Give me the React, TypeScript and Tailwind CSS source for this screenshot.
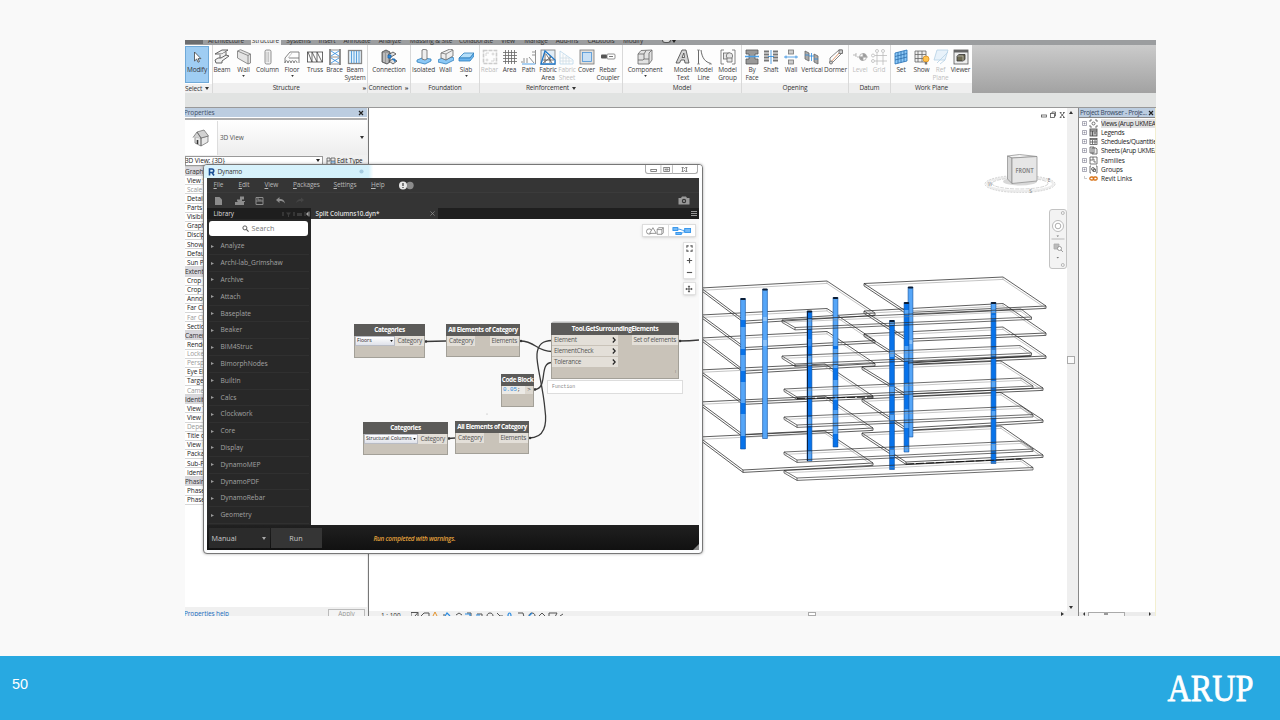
import React from "react";

const UI = "font-['Open_Sans','Noto_Sans',sans-serif]";

/* ---------- Ribbon icons ---------- */
const icons: Record<string, React.ReactNode> = {
  cursor: <path d="M5.5 3v9l2.200-2 1.300 3.200 1.400-.6-1.300-3h2.800z" fill="#fff" stroke="#444" strokeWidth=".8" />,
  beam: (
    <g fill="#f2f2f2" stroke="#555" strokeWidth=".9">
      <path d="M1 5l7-4h6l-6 4z" />
      <path d="M6 6v5l6-3.500V3" />
      <path d="M1 11l3-2h3l5-3 3 1-7 5v2H2z" />
    </g>
  ),
  wall: <path d="M1.500 2l3-1.300L14.500 5v9l-2.500 1L1.500 9zM1.500 2L12 6.500V15M12 6.500L14.500 5" fill="#e4e4e4" stroke="#777" />,
  column: <g fill="#eee" stroke="#777"><rect x="5" y="1" width="6" height="14" rx="1.500" /><path d="M7 3v10M8.500 3v10" stroke="#bbb" /></g>,
  floor: <g fill="none" stroke="#666"><path d="M1 14V9l5-6h9v6H5M15 9v5" /><path d="M1 14c0-3 3-3 3 0 0-3 3-3 3 0 0-3 3-3 3 0 0-3 3-3 3 0" /><path d="M4 9l4-5" stroke="#bbb" /></g>,
  truss: <path d="M0 3h16M0 13h16M.5 3v10M15.500 3v10M1 3l4 10V3l5 10V3l5 10" fill="none" stroke="#444" />,
  brace: <g fill="none"><path d="M3 0v16M13 0v16" stroke="#777" strokeWidth="1.600" /><path d="M3 1h10M3 8h10M3 15h10" stroke="#777" /><path d="M4 2l8 5M12 2L4 7M4 9l8 5M12 9l-8 5" stroke="#2b8be0" /></g>,
  beamsys: <g><rect x="1.500" y="1.500" width="13" height="13" fill="#e2f0fb" stroke="#888" strokeWidth="1.300" /><path d="M4.500 2v12M7 2v12M9.500 2v12M12 2v12" stroke="#4b97d8" strokeWidth=".9" /></g>,
  connection: <g><path d="M1 3l4-2 4 2v10l-3 2-5-2z" fill="#999" stroke="#444" /><path d="M3 4v9M6 4v10" stroke="#eee" /><path d="M7 6l5-3 3 2-5 3zM8 12l4-2 4 2-4 3z" fill="#ddd" stroke="#444" /><path d="M7 6h3v3H7zM11 10h3v3" fill="#2b8be0" stroke="#1b62a8" /></g>,
  isolated: <g><path d="M1 11l5-2 9 1v2l-6 3-8-2z" fill="#8cc8f5" stroke="#2d7dbd" /><path d="M6 1l2-.7 3 .7v9l-2 1-3-1z" fill="#eee" stroke="#666" /></g>,
  fwall: <g><path d="M0 11l4-2 4 2 5-3 3 1v2l-8 4-8-2z" fill="#8cc8f5" stroke="#2d7dbd" /><path d="M3 4l9-4 3 1v6l-7 4-5-2z" fill="#eee" stroke="#666" /><path d="M8 5l7-4M8 5v6M3 4l5 1" stroke="#777" fill="none" /></g>,
  slab: <g stroke="#2d7dbd"><path d="M1 9l5-5h10l-4 5z" fill="#b5dffa" /><path d="M1 9h11l4-5v3l-4 5H1z" fill="#6bb5ee" /></g>,
  rebar: <g fill="none" stroke="#ccc"><rect x="1.500" y="1.500" width="13" height="13" strokeWidth="1.600" strokeDasharray="4 1" /><path d="M4 7V4h3M9 12h3V9" /><circle cx="5" cy="11" r="1" /><circle cx="11" cy="5" r="1" /></g>,
  area: <path d="M3.500 1v14M6.500 1v14M9.500 1v14M12.500 1v14M1 3.500h14M1 6.500h14M1 9.500h14M1 12.500h14" stroke="#666" />,
  path: <g fill="none" stroke="#777"><path d="M14.500 1v14M11 3h3M11 6h3M8 8l5 6M3 9v5M6 9v5M1 12v2" /><path d="M1 15h13.500" stroke="#2b8be0" /></g>,
  fabric: <g fill="none"><rect x="1" y="1" width="14" height="14" stroke="#777" fill="#e2edf6" /><path d="M1 15L5 2l10 9v4z" stroke="#1c76c8" strokeWidth="1.300" fill="#fff" /><path d="M5 14V4M10 14V7M3 11h11M3 14l8-6M6 5l6 9" stroke="#555" /></g>,
  sheet: <g fill="none" stroke="#b9d6ea"><path d="M1 15V2l13 9v4z" /><path d="M4 15V5M7 15V7M10 15V9M1 12h12M1 9h9" stroke="#cfdde6" /></g>,
  cover: <g><rect x="1" y="1" width="14" height="14" fill="#e3e0dc" stroke="#777" /><rect x="3.500" y="3.500" width="9" height="9" fill="#c9e0f5" stroke="#4b93d6" /></g>,
  coupler: <g><path d="M1 7.500h14" stroke="#bbb" strokeWidth="2" /><rect x="1" y="5.500" width="6" height="4" rx="1" fill="#555" /><rect x="7" y="5" width="8" height="5" rx="1" fill="#fff" stroke="#777" /><path d="M9 7.500h4" stroke="#555" /></g>,
  component: <g fill="#e2e2e2" stroke="#666"><path d="M1 5l3-3.500L15 1v10l-3 4H1z" /><path d="M1 5h6v5h5V4l3-3M7 5l2-3.500M12 15v-5M7 10l-1 1H1" fill="none" /></g>,
  mtext: <g><path d="M1 14L7 1h4l3 13h-4l-.6-3H6l-1.500 3z" fill="#d4d4d4" stroke="#444" /><path d="M7 8.500L8.800 4l.8 4.500z" fill="#fff" stroke="#444" strokeWidth=".8" /></g>,
  mline: <g fill="none" stroke="#444"><path d="M2.500 1v14M5 1c1 8 4 12 10 13.500" /><path d="M1 1h3M1 15h3M13 15h3" stroke="#888" /></g>,
  mgroup: <g fill="#e6e6e6" stroke="#666"><path d="M4 1H1v14h3M12 1h3v14h-3" fill="none" /><rect x="3.500" y="4" width="6" height="6" /><circle cx="9.500" cy="7" r="3.200" /><path d="M7 9h5v4H7z" /></g>,
  face: <g><path d="M2 1h12v4h-3v5h3v5H2v-5h3V5H2z" fill="#999" stroke="#555" /><path d="M1 7.500h14" stroke="#4b9fe6" strokeWidth="1.500" /></g>,
  shaft: <g><path d="M1 2.500h5M1 5.500h5M1 8.500h5M1 11.500h5M10 2.500h5M10 5.500h5M10 8.500h5M10 11.500h5" stroke="#777" strokeWidth="2" /><path d="M8 1v14M5 7.500h6" stroke="#2b8be0" /></g>,
  owall: <g><rect x="5.500" y="1" width="5" height="4" fill="#ccc" stroke="#777" /><rect x="5.500" y="11" width="5" height="4" fill="#ccc" stroke="#777" /><path d="M1 8h14M3 6.500v3M13 6.500v3" stroke="#2b8be0" /></g>,
  vertical: <g><path d="M1 2l4 2v8l-4-2zM10 5l4 2v8l-4-2z" fill="#aaa" stroke="#666" /><path d="M5 7h5M7.500 4v8M1 6h4M10 10h4" stroke="#2b8be0" /></g>,
  dormer: <g fill="none" stroke="#666"><path d="M2 14V9L11 1h3v3L5 13z" /><path d="M2 14l11-12" stroke="#d9824a" /><rect x="11" y="1" width="3.500" height="3.500" fill="#ccc" /><circle cx="3" cy="13.500" r="1.500" fill="#ccc" /></g>,
  level: <g fill="none" stroke="#aaa"><path d="M1 6h3M4 4v4M5 8h11" /><circle cx="11" cy="8" r="3.500" /><path d="M11 4.500V8h3.500A3.500 3.500 0 0011 4.500M11 11.500V8H7.500A3.500 3.500 0 0011 11.500" fill="#999" /></g>,
  grid: <g fill="none" stroke="#bbb"><circle cx="6" cy="2" r="1.500" /><circle cx="12" cy="2" r="1.500" /><circle cx="2" cy="6.500" r="1.500" /><circle cx="2" cy="12" r="1.500" /><path d="M6 4v12M12 4v12M4 6.500h12M4 12h12" /></g>,
  set: <g><path d="M2 4l12-3v11L2 15z" fill="#8cc8f7" stroke="#226fb5" /><path d="M5 3.300v11M8 2.600v11M11 1.800v11M2 7.500l12-3M2 11l12-3" stroke="#2a6cab" strokeWidth=".8" /></g>,
  show: <g><path d="M1 2h11v11H1zM4 2v11M8 2v11M1 5.500h11M1 9.500h11" fill="#eee" stroke="#666" /><circle cx="12" cy="10" r="3" fill="#ffc24d" stroke="#d98e1f" /><rect x="10.800" y="13" width="2.400" height="2.500" fill="#777" /></g>,
  ref: <g fill="#e8f2fa" stroke="#b5d0e4"><path d="M4 1h11l-3 10H1z" /><path d="M4 14l11-11M12 11l-5 4" fill="none" /></g>,
  viewer: <g><rect x="1" y="1" width="14" height="14" fill="#eee" stroke="#555" /><rect x="1" y="1" width="14" height="2.500" fill="#666" /><path d="M4 7l2-1.500h6v5L10 12H4z" fill="#6f6b52" stroke="#333" /><path d="M4 7h6v5" fill="none" stroke="#ccc" strokeWidth=".6" /></g>,
};

type Tool = { c: number; l: string[]; i: string; off?: boolean; arrow?: boolean };
type Panel = { w: string; x: number; title: string; tools: Tool[]; mark?: string };

const panels: Panel[] = [
  { w: "w-[155px]", x: 212, title: "Structure", mark: "»", tools: [
    { c: 222, l: ["Beam"], i: "beam" }, { c: 243.5, l: ["Wall"], i: "wall", arrow: true }, { c: 267.5, l: ["Column"], i: "column" },
    { c: 292, l: ["Floor"], i: "floor", arrow: true }, { c: 315, l: ["Truss"], i: "truss" }, { c: 334.5, l: ["Brace"], i: "brace" }, { c: 355, l: ["Beam", "System"], i: "beamsys" } ] },
  { w: "w-[43px]", x: 367, title: "Connection", mark: "»", tools: [{ c: 389, l: ["Connection"], i: "connection" }] },
  { w: "w-[69px]", x: 410, title: "Foundation", tools: [
    { c: 423.5, l: ["Isolated"], i: "isolated" }, { c: 445.5, l: ["Wall"], i: "fwall" }, { c: 466, l: ["Slab"], i: "slab", arrow: true } ] },
  { w: "w-[143px]", x: 479, title: "Reinforcement", mark: "▾", tools: [
    { c: 489.5, l: ["Rebar"], i: "rebar", off: true }, { c: 509.5, l: ["Area"], i: "area" }, { c: 528.5, l: ["Path"], i: "path" },
    { c: 548, l: ["Fabric", "Area"], i: "fabric" }, { c: 567, l: ["Fabric", "Sheet"], i: "sheet", off: true }, { c: 586.5, l: ["Cover"], i: "cover" }, { c: 608, l: ["Rebar", "Coupler"], i: "coupler" } ] },
  { w: "w-[119px]", x: 622, title: "Model", tools: [
    { c: 645, l: ["Component"], i: "component", arrow: true }, { c: 683, l: ["Model", "Text"], i: "mtext" }, { c: 703.5, l: ["Model", "Line"], i: "mline" }, { c: 727.5, l: ["Model", "Group"], i: "mgroup" } ] },
  { w: "w-[107px]", x: 741, title: "Opening", tools: [
    { c: 752, l: ["By", "Face"], i: "face" }, { c: 771, l: ["Shaft"], i: "shaft" }, { c: 791, l: ["Wall"], i: "owall" }, { c: 812, l: ["Vertical"], i: "vertical" }, { c: 835.5, l: ["Dormer"], i: "dormer" } ] },
  { w: "w-[42px]", x: 848, title: "Datum", tools: [{ c: 860, l: ["Level"], i: "level", off: true }, { c: 879, l: ["Grid"], i: "grid", off: true }] },
  { w: "w-[82px]", x: 890, title: "Work Plane", tools: [
    { c: 901, l: ["Set"], i: "set" }, { c: 921.5, l: ["Show"], i: "show" }, { c: 940.5, l: ["Ref", "Plane"], i: "ref", off: true }, { c: 960.5, l: ["Viewer"], i: "viewer" } ] },
];

function ToolButton({ t, gap }: { t: Tool; gap: number }) {
  return (
    <div className={"flex w-5 shrink-0 flex-col items-center whitespace-nowrap text-[6.5px] leading-[8px] tracking-[-0.13px] " + (t.off ? "text-[#bdbdbd]" : "text-[#3c3c3c]")} style={{ marginLeft: gap }}>
      <svg viewBox="0 0 16 16" strokeWidth=".8" className="mb-px mt-[3.500px] size-4 shrink-0">{icons[t.i]}</svg>
      {t.l.map((s) => <span key={s}>{s}</span>)}
      {t.arrow && <svg viewBox="0 0 4 3" className="mt-px h-[2px] w-[3px]"><path d="M0 0h4L2 3z" fill="#333" /></svg>}
    </div>
  );
}

const tabs: [string, number][] = [["Architecture", 226], ["Structure", 265.500], ["Systems", 298.500], ["Insert", 327], ["Annotate", 357], ["Analyze", 390], ["Massing & Site", 431], ["Collaborate", 476], ["View", 508], ["Manage", 536], ["Add-Ins", 567], ["CADtools", 601], ["Modify", 633]];

function Ribbon() {
  return (
    <>
      <div className="flex h-[5px] shrink-0 overflow-hidden bg-[#9b9d9f] text-[6.5px] leading-[6px] tracking-[-0.1px] text-[#333]">
        <div className="h-1 w-[18px] shrink-0 bg-[#6c6d6f]" />
        {tabs.map(([t, c], i) => (
          <div key={t} className={"-mt-[2px] h-[7px] w-[30px] shrink-0 whitespace-nowrap " + (t === "Structure" ? "bg-[#efefef]" : "")} style={{ marginLeft: c - 15 - (i ? tabs[i - 1][1] + 15 : 203) }}>
            <span className="-mx-4 flex justify-center">{t}</span>
          </div>
        ))}
        <div className="ml-[14px] mt-0 h-[3px] w-[9px] rounded-b border border-t-0 border-[#555] bg-[#ddd]" />
        <svg viewBox="0 0 4 3" className="ml-px h-[3px] w-1"><path d="M0 0h4L2 3z" fill="#222" /></svg>
      </div>
      <div className="flex h-[48px] shrink-0 bg-gradient-to-b from-[#cbcbcb] to-[#a2a2a2]">
        <div className="flex w-[27px] flex-col bg-white text-[6.5px] tracking-[-0.13px] text-[#333]">
          <div className="mt-[1px] flex h-[37px] w-[24px] flex-col items-center border border-[#6fa9d8] bg-[#9fcdf3] leading-[8px]">
            <svg viewBox="0 0 16 16" className="mb-px mt-[1.500px] size-4 shrink-0">{icons.cursor}</svg>
            <span>Modify</span>
          </div>
          <div className="mt-px flex h-[9px] items-center gap-[3px] whitespace-nowrap bg-[#f0f0f0] leading-[9px]">Select <svg viewBox="0 0 4 3" className="h-[3px] w-1"><path d="M0 0h4L2 3z" fill="#333" /></svg></div>
        </div>
        {panels.map((p) => (
          <div key={p.title} className={"flex shrink-0 flex-col border-l border-[#d9d9d9] bg-[#fdfdfd] " + p.w}>
            <div className="flex h-[38px]">
              {p.tools.map((t, i) => <ToolButton key={i} t={t} gap={i ? t.c - p.tools[i - 1].c - 20 : t.c - p.x - 11} />)}
            </div>
            <div className="flex h-[10px] items-center justify-center gap-[3px] whitespace-nowrap bg-[#efefef] text-[6.5px] leading-[10px] tracking-[-0.13px] text-[#333]">
              <span className={p.title === "Structure" ? "flex-1 text-center" : ""}>{p.title}</span>
              {p.mark === "»" && <span className="pr-px text-[6px] font-bold">»</span>}
              {p.mark === "▾" && <svg viewBox="0 0 4 3" className="h-[3px] w-1"><path d="M0 0h4L2 3z" fill="#333" /></svg>}
            </div>
          </div>
        ))}
      </div>
      <div className="h-[14px] shrink-0 bg-[#e1e3e2]" />
    </>
  );
}

/* ---------- Properties palette ---------- */
const rows = ["#Graphi", "View S", "-Scale", "Detail", "Parts", "Visibil", "Graph", "Discip", "Show", "Defau", "Sun P", "#Extents", "Crop", "Crop", "Annot", "Far Cl", "-Far Cl", "Sectio", "#Camer", "Rende", "-Locke", "-Persp", "Eye El", "Targe", "-Came", "#Identity", "View T", "View N", "-Deper", "Title o", "View R", "Packa", "Sub-P", "Identi", "#Phasin", "Phase", "Phase"];

function Properties() {
  return (
    <div className="flex w-[182px] shrink-0 flex-col bg-white text-[6.5px] leading-[9px] tracking-[-0.1px] text-[#222]">
      <div className="flex h-[9px] shrink-0 items-center justify-between bg-[#bccde0] pr-[3px]">
        <span className="-ml-[1px] text-[#40516a]">Properties</span>
        <svg viewBox="0 0 6 6" className="size-[6px]"><path d="M1 1l4 4M5 1L1 5" stroke="#222" strokeWidth="1.200" /></svg>
      </div>
      <div className="mt-px h-[2px] shrink-0 bg-[#aeaeae]" />
      <div className="flex h-[35px] shrink-0 items-center bg-gradient-to-b from-white to-[#ededed]">
        <div className="flex h-[34px] w-[33px] items-center border-r border-[#ddd] bg-white">
          <svg viewBox="0 0 18 18" strokeWidth=".7" strokeLinejoin="round" className="ml-[7px] size-[18px]"><path d="M3 8v6l6 3V9zM9 9l7-2v6l-7 4z" fill="#e8e8e8" stroke="#666" /><path d="M1 8.500L5 3l4 6M5 3l7-2 4.500 6L9 9z" fill="#d2d2d2" stroke="#666" /><path d="M5.500 11v4" stroke="#333" strokeWidth="1.600" /></svg>
        </div>
        <span className="ml-[2px] flex-1 text-[#555]">3D View</span>
        <svg viewBox="0 0 4 3" className="mr-[3px] h-[3px] w-1"><path d="M0 0h4L2 3z" fill="#333" /></svg>
      </div>
      <div className="flex h-[12px] shrink-0 items-center border-b border-[#ccc] bg-[#f0f0f0]">
        <div className="flex h-[10px] w-[138px] items-center justify-between border border-[#999] bg-white pr-[2px]">
          <span className="-ml-[1px]">3D View: {"{3D}"}</span>
          <svg viewBox="0 0 4 3" className="h-[3px] w-1"><path d="M0 0h4L2 3z" fill="#222" /></svg>
        </div>
        <svg viewBox="0 0 10 8" strokeWidth=".8" className="ml-[3px] h-2 w-[10px]"><path d="M1 7V1h3v3H1M5 7V1h4v6H5M5 4h4" fill="#eee" stroke="#555" /><path d="M5 5h4" stroke="#2b8be0" /></svg>
        <span className="ml-px text-[6.300px] tracking-[-0.15px]">Edit Type</span>
      </div>
      {rows.map((r, i) => {
        const head = r[0] === "#", dim = r[0] === "-";
        return (
          <div key={i} className={"flex h-[9.140px] w-[18px] shrink-0 items-center overflow-hidden whitespace-nowrap border-b border-[#d6d6d6] " + (head ? "bg-[#d9d8dd] text-[#333]" : dim ? "pl-[2px] text-[#999]" : "pl-[2px]")}>
            {head || dim ? r.slice(1) : r}
          </div>
        );
      })}
      <div className="flex-1" />
      <div className="flex h-[9px] shrink-0 items-start justify-between overflow-hidden bg-[#f0f0f0] pr-[2px] pt-[2px]">
        <span className="-ml-px text-[#1b6fc0]">Properties help</span>
        <span className="w-[37px] border border-[#bbb] bg-[#f4f4f4] text-center leading-[8px] text-[#999]">Apply</span>
      </div>
    </div>
  );
}

/* ---------- 3D model ---------- */
type P = [number, number];
const leftSlabs: P[][] = [
  [[701, 288], [827, 281], [875, 313], [745, 321]], [[701, 315], [827, 308.500], [875, 340.500], [745, 347.500]],
  [[701, 338], [827, 331.500], [875, 363.500], [745, 371]], [[699, 370], [825, 364], [873, 396], [743, 402]],
  [[699, 402], [825, 396], [873, 428], [743, 434.500]], [[699, 437], [825, 431], [873, 463], [743, 470]],
];
const rightSlabs: P[][] = [
  [[864, 283.500], [1003, 277], [1046, 306], [908, 312.500]], [[864, 311], [1003, 303.500], [1046, 333], [908, 339]],
  [[864, 334], [1003, 327], [1046, 356], [908, 362]], [[862, 367], [1001, 361], [1043, 388], [906, 394]],
  [[862, 399], [1001, 392.500], [1043, 420], [906, 428]], [[862, 433], [1001, 426], [1043, 455], [906, 462]],
];
const frontSlabs: P[][] = [
  [[782, 320], [1021, 309], [1031.500, 317], [795, 327.500]], [[782, 356], [1020, 345.500], [1031.500, 353], [795, 364]],
  [[784, 389], [1021, 378], [1033, 386], [797, 397]], [[784, 417], [1021, 406], [1033, 414.500], [797, 425]],
  [[784, 452], [1021, 441], [1033, 449], [797, 460]], [[784, 470.500], [1021, 459], [1033, 467.500], [797, 478]],
];
function Slab({ p }: { p: P[] }) {
  const [a, b, c, d] = p, h = 2.400;
  return (
    <g fill="none" stroke="#2a2a2a" strokeWidth=".75">
      <path d={`M${a}L${b}L${c}L${d}Z`} />
      <path d={`M${a}v${h}L${d[0]} ${d[1] + h}L${c[0]} ${c[1] + h}V${c[1]}M${d}v${h}`} />
      <path d={`M${a[0]} ${a[1] + h}L${b[0]} ${b[1] + h}L${c[0]} ${c[1] + h}M${b}v${h}`} stroke="#888" strokeWidth=".5" />
    </g>
  );
}
const D = "#0873ea", L = "#56a6f8";
const columns: { x: number; y: number; b: number; base: string; seg: [number, number, string][] }[] = [
  { x: 743, y: 298.500, b: 449, base: L, seg: [[320, 327, D], [349, 355, D], [371, 382, D], [403, 414, D], [436, 449, D]] },
  { x: 765, y: 289, b: 438.500, base: L, seg: [[317, 321, "#8bc3fb"], [340, 346, "#8bc3fb"]] },
  { x: 809.500, y: 311, b: 461, base: D, seg: [[319, 329, L], [339, 346, "#2e8bf2"], [356, 366, L], [388, 398, L], [417, 426, L], [451, 461, L]] },
  { x: 835.500, y: 297.500, b: 447, base: L, seg: [[346, 349, D], [368, 380, D], [400, 410, D], [434, 447, D]] },
  { x: 910.500, y: 287, b: 437, base: L, seg: [[340, 344, "#8bc3fb"]] },
  { x: 906.500, y: 302.500, b: 452, base: D, seg: [[310, 315, L], [346, 361, L], [383, 395, L], [409, 428, L], [446, 452, L]] },
  { x: 892, y: 320.500, b: 469.500, base: D, seg: [[320.500, 325, L], [350, 357, L], [387, 394, L], [415, 421, L], [450, 457, L]] },
  { x: 993.500, y: 302.500, b: 463.500, base: D, seg: [[304, 313, L], [315, 319, "#2e8bf2"], [350, 356, L], [381, 388, L], [411, 418, L], [444, 451, L]] },
];

function Model() {
  return (
    <svg viewBox="369 108 698 503" className="block h-[503px] w-[698px]" fontFamily="Open Sans, sans-serif">
      {leftSlabs.map((p, i) => <Slab key={"l" + i} p={p} />)}
      {rightSlabs.map((p, i) => <Slab key={"r" + i} p={p} />)}
      {columns.map((c, i) => (
        <g key={i}>
          <rect x={c.x - 2.400} y={c.y} width="4.800" height={c.b - c.y} fill={c.base} />
          {c.seg.map((s, j) => <rect key={j} x={c.x - 2.400} y={s[0]} width="4.800" height={s[1] - s[0]} fill={s[2]} />)}
          <path d={`M${c.x - 2.400} ${c.y}V${c.b}h4.800V${c.y}`} fill="none" stroke="#0d4f9e" strokeWidth=".6" />
          <rect x={c.x - 2.600} y={c.y - .5} width="5.200" height="2" rx=".8" fill="#0b1d35" />
        </g>
      ))}
      <g opacity=".9">{frontSlabs.map((p, i) => <Slab key={"f" + i} p={p} />)}</g>
      <path d="M807.500 312v149" stroke="#0c1830" strokeWidth=".9" />
      <path d="M797 398.500L873 397M906 464L1021 459" stroke="#111" strokeWidth=".9" strokeDasharray="8 2" fill="none" />
      <path d="M908 363L1031 356" stroke="#222" strokeWidth=".9" />
      {/* document window buttons */}
      <g fill="none" stroke="#555" strokeWidth=".8"><rect x="1041.500" y="115" width="5" height="2" /><rect x="1050.500" y="113.500" width="4" height="4" /><path d="M1052 113.500v-1.500h3.500v4h-1.500" /><path d="M1060 112.500l4.500 5M1064.500 112.500l-4.500 5M1060 112.500h1.500M1063 112.500h1.500M1060 117.500h1.500M1063 117.500h1.500" strokeWidth=".9" /></g>
      {/* view cube */}
      <g>
        <ellipse cx="1020" cy="184" rx="33" ry="7" fill="none" stroke="#ececec" strokeWidth="2" />
        <ellipse cx="1020" cy="184" rx="35" ry="8.500" fill="none" stroke="#b5b5b5" strokeWidth=".6" strokeDasharray="2 1" />
        <ellipse cx="1020" cy="183.500" rx="28" ry="5.500" fill="#fff" stroke="#b8b8b8" strokeWidth=".6" strokeDasharray="4 1" />
        <ellipse cx="1020" cy="181.500" rx="17" ry="4" fill="#c8c8c8" opacity=".7" />
        <text x="1030.500" y="193" fontSize="5" fill="#777" textAnchor="middle">S</text>
        <text x="990" y="186" fontSize="4.500" fill="#777" textAnchor="middle">W</text>
        <text x="1049" y="182" fontSize="4.500" fill="#777" textAnchor="middle">E</text>
        <path d="M1007.500 156l12-1.500 17.500 2-25 1.500z" fill="#f4f4f4" stroke="#888" strokeWidth=".7" />
        <path d="M1007.500 156l4.500 2v25.500l-4.500-4.500z" fill="#d5d5d5" stroke="#888" strokeWidth=".7" />
        <path d="M1012 158l25-1.500V181l-25 2.500z" fill="#e6e6e6" stroke="#888" strokeWidth=".7" />
        <text x="1015.500" y="173.300" fontSize="7" fontWeight="700" fill="#8a8a8a" textLength="18" lengthAdjust="spacingAndGlyphs">FRONT</text>
      </g>
      {/* navigation bar */}
      <g fill="none" stroke="#aaa" strokeWidth=".8">
        <rect x="1049.500" y="209.500" width="17" height="59" rx="2.500" fill="#f3f3f3" stroke="#b5b5b5" />
        <circle cx="1062.800" cy="213" r="1.500" /><circle cx="1062.800" cy="265" r="1.500" />
        <circle cx="1058" cy="226" r="5.500" fill="#fff" /><circle cx="1058" cy="226" r="2.800" stroke="#999" />
        <path d="M1051.500 239h13" />
        <path d="M1054 244h5v5h-5z" fill="#bbb" /><circle cx="1059.500" cy="248.500" r="2" fill="#fff" stroke="#888" /><path d="M1061 250l2 2" stroke="#888" />
        <path d="M1056.500 235.500h2.500l-1.200 1.500zM1056.500 257h2.500l-1.200 1.500z" fill="#777" stroke="none" />
      </g>
    </svg>
  );
}

/* ---------- Project browser ---------- */
const tree: [string, React.ReactNode][] = [
  ["Views (Arup UKMEA", <g fill="none" stroke="#555"><path d="M1 3V1h2M6 1h2v2M8 6v2H6M3 8H1V6" /><circle cx="4.500" cy="4.500" r="1.500" /></g>],
  ["Legends", <g><rect x="1" y="1" width="7" height="7" fill="#bbb" stroke="#444" /><path d="M1 3h7M3.500 3v5M5 5h2" stroke="#444" /></g>],
  ["Schedules/Quantities", <g><rect x="1" y="1.500" width="7" height="6" fill="#fff" stroke="#555" /><path d="M1 2.500h7M1 5h7M3.500 3v4M6 3v4" stroke="#555" /></g>],
  ["Sheets (Arup UKMEA", <path d="M1 1h4v6H1zM3 2h4l1 1v5H3z" fill="#eee" stroke="#555" />],
  ["Families", <path d="M1 1h7v7H1zM1 4h3V1M5 3v3h2" fill="#fff" stroke="#555" />],
  ["Groups", <g fill="none" stroke="#555"><path d="M2 1H1v7h1M7 1h1v7H7" /><circle cx="4" cy="4" r="1.500" /><path d="M4 4h2.500v2.500H4z" /></g>],
  ["Revit Links", <g fill="none" stroke="#d8741a" strokeWidth="1.300"><rect x=".8" y="3" width="4" height="3" rx="1.500" /><rect x="4.200" y="3" width="4" height="3" rx="1.500" /></g>],
];
function Browser() {
  return (
    <div className="flex w-[78px] shrink-0 flex-col overflow-hidden border-l border-r border-l-[#888] border-r-[#f3efd0] bg-white text-[6.500px] leading-[9px] tracking-[-0.3px] text-[#222]">
      <div className="flex h-[9px] shrink-0 items-center justify-between bg-[#bccde0] pl-px pr-px text-[#33455e]">
        <span className="whitespace-nowrap">Project Browser - Proje...</span>
        <svg viewBox="0 0 6 6" className="size-[6px] shrink-0"><path d="M1 1l4 4M5 1L1 5" stroke="#222" strokeWidth="1.200" /></svg>
      </div>
      <div className="mb-px h-px shrink-0 bg-[#888]" />
      {tree.map(([t, ic], i) => (
        <div key={t} className="flex h-[9.140px] shrink-0 items-center whitespace-nowrap pl-[3px]">
          <svg viewBox="0 0 5 5" className="size-[5px] shrink-0">{i < 6 ? <path d="M.5.500h4v4h-4zM1.500 2.500h2M2.500 1.500v2" fill="#fff" stroke="#889" strokeWidth=".7" /> : <path d="M2.500 0v2.500H5" fill="none" stroke="#aaa" strokeWidth=".6" />}</svg>
          <svg viewBox="0 0 9 9" strokeWidth=".8" className="ml-[2px] size-[9px] shrink-0">{ic}</svg>
          <span className={"ml-[3px] w-[54px] overflow-hidden " + (i === 0 ? "bg-[#e2e2e2]" : "") + (i > 3 ? " tracking-[-0.1px]" : "")}>{t}</span>
        </div>
      ))}
      <div className="flex-1" />
      <div className="flex h-[4px] shrink-0 justify-between bg-[#ececec] px-[4px]">
        <svg viewBox="0 0 2 4" className="h-1 w-[2px]"><path d="M2 0v4L0 2z" fill="#333" /></svg>
        <div className="mr-[22px] flex w-[37px] justify-center border border-b-0 border-[#aaa] bg-[#f8f8f8]"><div className="h-[2px] w-1 bg-[#999]" /></div>
        <svg viewBox="0 0 2 4" className="h-1 w-[2px]"><path d="M0 0v4l2-2z" fill="#333" /></svg>
      </div>
    </div>
  );
}

/* ---------- Dynamo ---------- */
const library = ["Analyze", "Archi-lab_Grimshaw", "Archive", "Attach", "Baseplate", "Beaker", "BIM4Struc", "BimorphNodes", "BuiltIn", "Calcs", "Clockwork", "Core", "Display", "DynamoMEP", "DynamoPDF", "DynamoRebar", "Geometry"];
const OX = 311, OY = 219;
const box = (x: number, y: number, w: number, h: number) => ({ left: x - OX, top: y - OY, width: w, height: h });

function Node({ r, title, children }: { r: [number, number, number, number]; title: string; children: React.ReactNode }) {
  return (
    <div className="absolute flex flex-col border border-[#a3a098] bg-[#c9c3b9]" style={box(...r)}>
      <div className="-mx-px -mt-px flex h-[12px] shrink-0 items-center justify-center whitespace-nowrap bg-[#5c5b59] text-[6.400px] font-bold tracking-[-0.34px] text-white">{title}</div>
      {children}
    </div>
  );
}
const port = "flex h-[10px] items-center whitespace-nowrap bg-[#e3dfd8] px-[2px] text-[6.400px] tracking-[-0.25px] text-[#555]";

function InOut() {
  return <div className="flex justify-between"><span className={port + " w-[28px]"}>Category</span><span className={port + " w-[29px] justify-end"}>Elements</span></div>;
}
function Select({ value, w }: { value: string; w: string }) {
  return (
    <div className="flex justify-between">
      <span className={"flex h-[10px] items-center justify-between whitespace-nowrap border border-[#b9bcc4] bg-gradient-to-b from-white to-[#dfe2ea] px-px text-[5.1px] text-[#222] " + w}>
        {value}<svg viewBox="0 0 4 3" className="h-[2px] w-[3px]"><path d="M0 0h4L2 3z" fill="#111" /></svg>
      </span>
      <span className={port}>Category</span>
    </div>
  );
}

function Workspace() {
  return (
    <div className="relative h-[306px] overflow-hidden bg-[#f9f9f9]">
      <svg viewBox="311 219 388 306" className="absolute left-0 top-0 h-[306px] w-[388px]">
        <g fill="none" stroke="#3a3a3a" strokeWidth="1.300">
          <path d="M425 341.500L446 341M448 438.500L455 438M679 341Q690 341 699 340" />
          <path d="M520 341C536 341 536 351.500 552 351.500" />
          <path d="M534 389.500C549 389.500 538 362.500 552 362.500" />
          <path d="M529 438C545 438 547 424 545 410C543 385 536 365 537 354C538 344 543 340.500 552 340.500" />
        </g>
        <g fill="#333"><circle cx="426" cy="341.500" r="1.300" /><circle cx="521" cy="341" r="1.300" /><circle cx="530" cy="438" r="1.300" /><circle cx="535" cy="389.500" r="1.300" /><circle cx="680" cy="341" r="1.300" /><circle cx="449" cy="438.500" r="1.300" /></g>
        <path d="M551 324q0-2.500 3-2.500h122q3 0 3 2.500z" fill="#bbb" />
        <circle cx="487" cy="414" r=".5" fill="#999" />
      </svg>
      <Node r={[354, 324, 71, 34]} title="Categories"><Select value="Floors" w="w-[43px]" /></Node>
      <Node r={[446, 324, 74, 33]} title="All Elements of Category"><InOut /></Node>
      <Node r={[551, 323, 128, 56]} title="Tool.GetSurroundingElements">
        <div className="flex items-start justify-between">
          <div className="flex w-[66px] flex-col gap-px">
            {["Element", "ElementCheck", "Tolerance"].map((t) => (
              <span key={t} className={port + " justify-between"}>{t}<svg viewBox="0 0 4 6" className="h-[6px] w-1"><path d="M.8.500L3.200 3 .8 5.500" fill="none" stroke="#222" strokeWidth="1.200" /></svg></span>
            ))}
          </div>
          <span className={port}>Set of elements</span>
        </div>
        <span className="mr-[2px] mt-[2px] self-end text-[4px] text-[#777]">l</span>
      </Node>
      <div className="absolute border border-[#ddd] bg-white pl-[4px] pt-[2px] font-['Liberation_Mono',monospace] text-[4.800px] leading-[7px] text-[#888]" style={box(547, 380, 136, 14)}>Function</div>
      <Node r={[501, 374, 33, 33]} title="Code Block">
        <div className="flex h-[8px] justify-between bg-[#eceae6] font-['Liberation_Mono',monospace] text-[5.800px] leading-[8px]">
          <span className="pl-px text-[#2b8be0]">0.05<span className="text-[#333]">;</span></span><span className="w-[8px] bg-[#ddd8d0] text-center text-[#444]">&gt;</span>
        </div>
      </Node>
      <Node r={[363, 422, 85, 33]} title="Categories"><Select value="Structural Columns" w="w-[56px]" /></Node>
      <Node r={[455, 421, 74, 33]} title="All Elements of Category"><InOut /></Node>

      <div className="absolute right-[3px] top-[5px] flex h-[13px] w-[54px] items-center border border-[#ddd] bg-white shadow-sm">
        <svg viewBox="0 0 27 12" className="h-3 w-[27px] border-r border-[#ddd]"><g fill="#fff" stroke="#777" strokeWidth=".8"><circle cx="6.500" cy="6.500" r="2.800" /><path d="M10.500 2.500L14 8.500H7z" /><path d="M15 4.500l1.500-2h5v5.500l-1.500 1.500h-5zM15 4.500h5v5M20 4.500l1.500-2" /></g></svg>
        <svg viewBox="0 0 26 12" className="h-3 w-[26px]"><g fill="#74b9f6" stroke="#2b90ea" strokeWidth=".9"><rect x="4" y="2.500" width="5" height="3" /><rect x="7" y="7.500" width="5.500" height="2" /><rect x="16" y="3.500" width="6" height="4" /><path d="M9 4c4 0 3 1.500 7 1.500M12.500 8.500c2 0 1.500-2 3.500-2" fill="none" /></g></svg>
      </div>
      <div className="absolute right-[3px] top-[23px] flex h-[37px] w-[13px] flex-col items-center justify-around border border-[#e2e2e2] bg-white shadow-sm">
        <svg viewBox="0 0 8 8" className="size-[7px]"><path d="M1 3V1h2M5 1h2v2M7 5v2H5M3 7H1V5" fill="none" stroke="#555" strokeWidth="1.200" /></svg>
        <svg viewBox="0 0 8 8" className="size-[7px]"><path d="M1 4h6M4 1v6" stroke="#555" strokeWidth="1.300" /></svg>
        <svg viewBox="0 0 8 8" className="size-[7px]"><path d="M1 4h6" stroke="#555" strokeWidth="1.300" /></svg>
      </div>
      <div className="absolute right-[3px] top-[63px] flex size-[13px] items-center justify-center border border-[#e2e2e2] bg-white shadow-sm">
        <svg viewBox="0 0 10 10" className="size-2"><path d="M5 1v8M1 5h8" stroke="#555" strokeWidth="1.200" /><path d="M3.300 2.500L5 .5l1.700 2zM3.300 7.500L5 9.500l1.700-2zM2.500 3.300L.5 5l2 1.700zM7.500 3.300L9.500 5l-2 1.700z" fill="#555" /></svg>
      </div>
    </div>
  );
}

const menu: [string, number][] = [["File", 214], ["Edit", 239], ["View", 265], ["Packages", 293.500], ["Settings", 334], ["Help", 371.500]];

function Dynamo() {
  return (
    <div className="absolute left-[17.500px] top-[124px] flex h-[390px] w-[500px] flex-col rounded-[4px] border border-[#777] bg-[#fcfdfe] px-[3px] pb-[3px] shadow-[0_0_3px_rgba(0,0,0,0.35)]">
      <div className="-mx-[3px] flex h-[13px] shrink-0 items-center rounded-t-[3px] bg-gradient-to-r from-[#d9f2fb] from-0% via-[#d3f1fb] via-33% to-white to-34% pl-[4px]">
        <svg viewBox="0 0 7 8" className="h-2 w-[7px]"><path d="M1.500 7.500V1h2.500a1.700 1.700 0 010 3.500H2M4 4.500l2 3" fill="none" stroke="#1b4f94" strokeWidth="1.600" /></svg>
        <span className="ml-[3px] text-[6.500px] tracking-[-0.15px] text-[#333]">Dynamo</span>
        <svg viewBox="0 0 6 6" className="ml-[117px] size-[5px]"><circle cx="3" cy="3" r="2.500" fill="#a5cbe0" /></svg>
        <div className="flex-1" />
        <div className="mr-[4px] flex h-[9px] w-[53px] self-start rounded-b-[3px] border border-t-0 border-[#aaa] bg-white">
          <svg viewBox="0 0 53 9" className="h-[9px] w-[53px]"><path d="M15.500 0v9M27.500 0v9" stroke="#bbb" /><g fill="#fff" stroke="#666" strokeWidth=".8"><rect x="5" y="4.500" width="6" height="2" /><rect x="18.500" y="2.500" width="6" height="4" /><path d="M20 4h3v1h-3z" /><path d="M37 2.500h2l1 1 1-1h2M37 6.500h2l1-1 1 1h2M38 2.500v4M42 2.500v4" /></g></svg>
        </div>
      </div>
      <div className="flex h-[14px] shrink-0 items-center bg-[#353535] text-[6.500px] tracking-[-0.15px] text-[#b8b8b8]">
        {menu.map(([m, x], i) => <span key={m} className="w-[25px] shrink-0 whitespace-nowrap" style={{ marginLeft: i ? x - menu[i - 1][1] - 25 : x - 207 }}><span className="underline decoration-[0.5px] underline-offset-1">{m[0]}</span>{m.slice(1)}</span>)}
        <svg viewBox="0 0 17 9" className="ml-[2px] h-[9px] w-[17px]"><circle cx="12" cy="4.500" r="3.700" fill="#8b8b8b" /><circle cx="5" cy="4.500" r="4" fill="#e8e8e8" /><path d="M5 2v3M5 6v1" stroke="#333" strokeWidth="1.200" /></svg>
      </div>
      <div className="flex h-[16px] shrink-0 items-center border-t border-[#3b3b3b] bg-[#343434] px-[6px]">
        <svg viewBox="0 0 96 12" className="h-3 w-24"><g fill="#8c8c8c"><path d="M2 2h4.500L9 4.500V10H2z" /><path d="M27 1.500h4v3h-4zM24 4.500h5v2h-5zM25 6h7v1h-7zM22 7h9v3h-9z" /><path d="M43 2.500h7v7h-7zM43 6h7M45 2.500V5h3.500" fill="none" stroke="#8c8c8c" /><path d="M63 5l3.500-3v2c4 0 5 2 5.500 4.500-1.500-2-3-2.500-5.500-2.500v2z" /></g><path d="M91 5l-3-2.500V4c-3 0-4.500 2-5 4 1.500-1.500 3-2 5-2v1.500z" fill="#454545" /></svg>
        <div className="flex-1" />
        <svg viewBox="0 0 12 9" className="mr-[3px] h-[9px] w-3"><path d="M.5 2H3l1-1.500h4L9 2h2.500v6.500H.5z" fill="#999" /><circle cx="6" cy="5" r="2.200" fill="#343434" /><circle cx="6" cy="5" r="1.100" fill="#999" /></svg>
      </div>
      <div className="flex h-[317px] shrink-0">
        <div className="flex w-[104.500px] shrink-0 flex-col bg-[#282828]">
          <div className="flex h-[11px] shrink-0 items-center bg-[#1e1e1e] pl-[7px] text-[6.400px] tracking-[-0.05px] text-[#ddd]">
            Library
            <svg viewBox="0 0 32 8" className="ml-auto mr-[1px] h-2 w-8"><path d="M5 2v4M16 2v4M27 2v4" stroke="#666" strokeWidth=".7" /><path d="M8 2.500h5L11 5v2h-1V5zM19 3h5v3h-5z" fill="#3c3c3c" /><path d="M30.500 1.500v5L28 4z" fill="#aaa" /><path d="M31.200 1.500v5" stroke="#aaa" strokeWidth=".7" /></svg>
          </div>
          <div className="mx-[2px] mb-[2.500px] mt-[2px] flex h-[15px] w-[99px] shrink-0 items-center justify-center gap-[3px] rounded-[3px] bg-white text-[7.200px] text-[#777]">
            <svg viewBox="0 0 8 8" className="size-[7px]"><circle cx="3.300" cy="3.300" r="2.300" fill="none" stroke="#555" strokeWidth="1.100" /><path d="M5 5l2.500 2.500" stroke="#555" strokeWidth="1.300" /></svg>Search
          </div>
          {library.map((l) => (
            <div key={l} className="mx-[2px] flex h-[16.8px] shrink-0 items-center border-b border-[#303030] text-[6.700px] leading-[14px] text-[#a3a3a3]">
              <svg viewBox="0 0 4 4" className="ml-[2px] mr-[7px] size-[3px]"><path d="M0 0l4 2-4 2z" fill="#999" /></svg>{l}
            </div>
          ))}
        </div>
        <div className="flex min-w-0 flex-1 flex-col">
          <div className="flex h-[11px] items-center justify-between bg-[#1f1f1f]">
            <div className="flex h-[11px] w-[127px] items-center justify-between bg-[#343434] pl-[4.500px] pr-[3px] text-[6.400px] font-semibold tracking-[-0.12px] text-[#ddd]">Split Columns10.dyn*<svg viewBox="0 0 6 6" className="size-[5px]"><path d="M.5.500l5 5M5.500.500l-5 5" stroke="#999" strokeWidth=".8" /></svg></div>
            <div className="mr-[2px] flex w-[6px] flex-col gap-px"><div className="h-px bg-[#999]" /><div className="h-px bg-[#999]" /><div className="h-px bg-[#999]" /></div>
          </div>
          <Workspace />
        </div>
      </div>
      <div className="flex h-[25px] shrink-0 items-start bg-gradient-to-b from-[#202020] to-[#111] pt-[3px] text-[7.200px] text-[#c8c8c8]">
        <div className="ml-[2px] flex h-[20px] w-[61px] items-center justify-between bg-[#2b2b2b] pl-[3px] pr-[4px]">Manual<svg viewBox="0 0 4 3" className="h-[3px] w-1"><path d="M0 0h4L2 3z" fill="#aaa" /></svg></div>
        <div className="ml-px flex h-[20px] w-[51px] items-center justify-center bg-[#353535]">Run</div>
        <span className="ml-[52px] mt-[6px] text-[6.400px] font-semibold italic leading-[9px] tracking-[-0.22px] text-[#e3a13c]">Run completed with warnings.</span>
        <svg viewBox="0 0 6 6" className="ml-auto mt-auto size-[6px]"><path d="M6 0v6H0z" fill="#888" /></svg>
      </div>
    </div>
  );
}

function StatusBar() {
  return (
    <div className="flex h-[5px] w-[698px] shrink-0 items-start overflow-hidden bg-[#f0f0f0]">
      <span className="ml-[12px] w-[30px] text-[6.400px] leading-[9px] text-[#333]">1 : 100</span>
      <svg viewBox="0 0 152 5" className="h-[5px] w-[152px]">
        <g fill="none" stroke="#555" strokeWidth="1"><path d="M0 1.500h7l-3 3.500M0 1.500v4M7 1.500v4M10 5l3-3h5v4M33 5V3M45 4l3-2 3 2M56 2h4v4M66 3h5v3M76 5c0-4 6-4 6 0M86 2l3 3h3M107 2h5l1 4M118 5c0-4 6-4 6 0M128 5l3-3 3 3M138 2h8l-2 4M138 2v4M149 5l3-2" /><path d="M22 5l2-4 2 4" stroke="#e3922b" /><path d="M34 5l2-3 3 3M54 3h5v3M65 4h4M97 5c0-4 3-4 3 0M118 5l3-3" stroke="#2b8be0" strokeWidth="1.200" /></g>
      </svg>
      <div className="ml-[245px] mt-px h-1 w-[8px] border border-[#aaa] bg-white" />
      <svg viewBox="0 0 3 4" className="ml-auto mr-[3px] mt-px h-1 w-[3px]"><path d="M0 0l3 2-3 2z" fill="#333" /></svg>
    </div>
  );
}

export default function App() {
  return (
    <div className={"flex h-[720px] w-[1280px] flex-col overflow-hidden bg-[#f9f9f9] " + UI}>
      <div className="relative ml-[185px] mt-[40px] flex h-[576px] w-[971px] shrink-0 flex-col overflow-hidden bg-white">
        <Ribbon />
        <div className="flex h-[509px] shrink-0 border-t border-[#999]">
          <Properties />
          <div className="w-[2px] shrink-0 border-r border-[#777] bg-[#eee]" />
          <div className="flex w-[698px] shrink-0 flex-col bg-white"><Model /><StatusBar /></div>
          <div className="flex w-[11px] shrink-0 flex-col items-center justify-between bg-[#efefef] py-[3px] pr-[3px]">
            <svg viewBox="0 0 4 3" className="h-[3px] w-1"><path d="M0 3h4L2 0z" fill="#333" /></svg>
            <div className="mb-[1px] size-2 border border-[#aaa] bg-[#fafafa]" />
            <svg viewBox="0 0 4 3" className="mb-[4px] h-[3px] w-1"><path d="M0 0h4L2 3z" fill="#333" /></svg>
          </div>
          <Browser />
        </div>
        <Dynamo />
      </div>
      <div className="mt-[40px] flex h-[64px] items-center justify-between bg-[#28a9e1] pl-[12px] pr-[26px]">
        <span className="mb-[7px] font-['Liberation_Sans',sans-serif] text-[14.500px] text-white">50</span>
        <svg viewBox="0 0 88 32" className="h-8 w-[88px]"><text x="1.500" y="28.500" fill="#fff" stroke="#fff" strokeWidth=".8" fontFamily="Liberation Serif, serif" fontSize="37.500" textLength="86" lengthAdjust="spacingAndGlyphs">ARUP</text></svg>
      </div>
    </div>
  );
}
